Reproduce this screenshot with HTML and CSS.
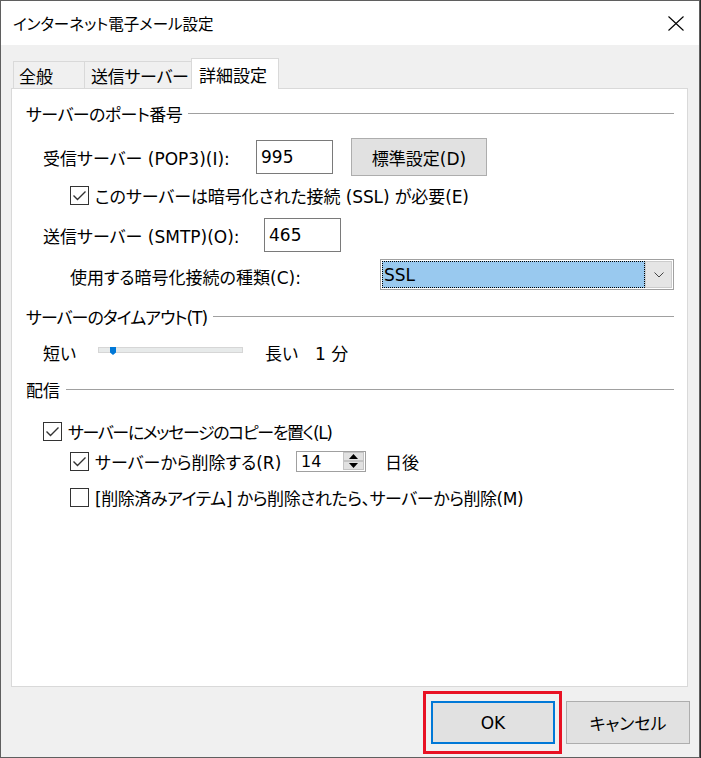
FILE: index.html
```html
<!DOCTYPE html>
<html lang="ja">
<head>
<meta charset="utf-8">
<title>インターネット電子メール設定</title>
<link rel="stylesheet" href="styles.css">
</head>
<body>
<div class="window">
  <div class="titlebar">
    <span class="title">インターネット電子メール設定</span>
    <svg class="close" viewBox="0 0 16 15" width="16" height="15"><path d="M0.5 0.5 L15.5 14.5 M15.5 0.5 L0.5 14.5" stroke="#000" stroke-width="1.1" fill="none"/></svg>
  </div>
  <div class="tabs">
    <div class="tab tab-general">全般</div>
    <div class="tab tab-send">送信サーバー</div>
    <div class="tab tab-adv">詳細設定</div>
  </div>
  <div class="panel">
    <div class="group g1"><span class="tight">サーバーのポート番号</span><span class="line"></span></div>
    <div class="row row-pop">
      <span class="lbl-pop">受信サーバー (POP3)(I):</span>
      <span class="input in-pop">995</span>
      <span class="btn btn-std">標準設定(D)</span>
    </div>
    <div class="row row-ssl">
      <span class="cb"><svg viewBox="0 0 17 17" width="17" height="17"><path d="M2.5 8.5 L6.5 12.5 L14.5 4.5" stroke="#333" stroke-width="1.4" fill="none"/></svg></span>
      <span class="slight">このサーバーは暗号化された接続 (SSL) が必要(E)</span>
    </div>
    <div class="row row-smtp">
      <span class="lbl-smtp">送信サーバー (SMTP)(O):</span>
      <span class="input in-smtp">465</span>
    </div>
    <div class="row row-enc">
      <span class="lbl-enc">使用する暗号化接続の種類(C):</span>
      <span class="combo">
        <span class="combo-val">SSL</span>
        <span class="combo-btn"><svg viewBox="0 0 10 6" width="10" height="6"><path d="M0.5 0.5 L5 5 L9.5 0.5" stroke="#444" stroke-width="1" fill="none"/></svg></span>
      </span>
    </div>
    <div class="group g2"><span class="tighter-g">サーバーのタイムアウト(T)</span><span class="line"></span></div>
    <div class="row row-slider">
      <span class="lbl-short">短い</span>
      <span class="track"><span class="thumb"></span></span>
      <span class="lbl-long">長い</span>
      <span>1 分</span>
    </div>
    <div class="group g3"><span>配信</span><span class="line"></span></div>
    <div class="row row-copy">
      <span class="cb"><svg viewBox="0 0 17 17" width="17" height="17"><path d="M2.5 8.5 L6.5 12.5 L14.5 4.5" stroke="#333" stroke-width="1.4" fill="none"/></svg></span>
      <span class="tighter">サーバーにメッセージのコピーを置く(L)</span>
    </div>
    <div class="row row-del">
      <span class="cb"><svg viewBox="0 0 17 17" width="17" height="17"><path d="M2.5 8.5 L6.5 12.5 L14.5 4.5" stroke="#333" stroke-width="1.4" fill="none"/></svg></span>
      <span class="lbl-del">サーバーから削除する(R)</span>
      <span class="spin">
        <span class="spin-val">14</span>
        <span class="spin-btns">
          <span class="spin-b"><svg viewBox="0 0 9 5" width="9" height="5"><path d="M0 5 L4.5 0 L9 5 Z" fill="#000"/></svg></span>
          <span class="spin-b"><svg viewBox="0 0 9 5" width="9" height="5"><path d="M0 0 L4.5 5 L9 0 Z" fill="#000"/></svg></span>
        </span>
      </span>
      <span class="lbl-days">日後</span>
    </div>
    <div class="row row-trash">
      <span class="cb"></span>
      <span class="trash">[削除済みアイテム] から削除されたら、サーバーから削除(M)</span>
    </div>
  </div>
  <div class="footer">
    <span class="ok-wrap">
      <span class="btn btn-ok">OK</span>
      <span class="mark"></span>
    </span>
    <span class="btn btn-cancel">キャンセル</span>
  </div>
</div>
</body>
</html>
```

FILE: styles.css
```css
* { box-sizing: border-box; margin: 0; padding: 0; }
html, body { width: 701px; height: 758px; overflow: hidden; }
body {
  background: #2b2b2b;
  font-family: "DejaVu Sans", "Noto Sans CJK JP", sans-serif;
  font-feature-settings: "palt";
  color: #000;
}
.window {
  width: 700px;
  height: 758px;
  border: 1px solid #5f5f5f;
  background: #f0f0f0;
  display: flex;
  flex-direction: column;
}
.titlebar {
  height: 44px;
  flex: none;
  background: #fff;
  display: flex;
  align-items: center;
  padding: 0 15px 0 12px;
  font-size: 15.5px;
}
.title { flex: 1; }
.close { display: block; }

.tabs {
  display: flex;
  align-items: flex-end;
  height: 30px;
  flex: none;
  margin: 13px 0 0 12px;
  font-size: 17px;
}
.tab {
  height: 27px;
  border: 1px solid #d9d9d9;
  border-bottom: none;
  display: flex;
  align-items: center;
  margin-left: -1px;
  background: #f0f0f0;
  white-space: nowrap;
}
.tab-general { width: 72px; padding-left: 5px; margin-left: 0; }
.tab-send { width: 108px; padding-left: 6px; letter-spacing: -0.3px; }
.tab-adv {
  width: 88px;
  height: 31px;
  padding-left: 7px;
  background: #fff;
  margin-bottom: -1px;
  position: relative;
  z-index: 1;
}

.panel {
  flex: none;
  margin: 0 11px 0 10px;
  height: 599px;
  border: 1px solid #d9d9d9;
  background: #fff;
  padding: 0 13px 0 14px;
  font-size: 17px;
}
.tight { letter-spacing: -0.6px; }
.slight { letter-spacing: -0.1px; }
.tighter-g { letter-spacing: -1px; }
.tighter { letter-spacing: -1.4px; }
.trash { letter-spacing: -0.45px; }
.group {
  display: flex;
  align-items: center;
  height: 23px;
  white-space: nowrap;
}
.group .line {
  flex: 1;
  height: 1px;
  background: #a0a0a0;
  margin-left: 6px;
}
.g1 { margin-top: 13px; }
.g2 { margin-top: 15px; }
.g3 { margin-top: 16px; }

.row {
  display: flex;
  align-items: center;
  white-space: nowrap;
}
.row-pop { margin-top: 13px; height: 38px; padding-left: 17px; }
.lbl-pop { width: 213px; }
.input {
  height: 34px;
  border: 1px solid #7a7a7a;
  background: #fff;
  padding-left: 4px;
  display: flex;
  align-items: center;
}
.in-pop { width: 77px; }
.btn {
  display: flex;
  align-items: center;
  justify-content: center;
  background: #e1e1e1;
  border: 1px solid #adadad;
}
.btn-std { margin-left: 18px; width: 136px; height: 38px; }

.cb {
  flex: none;
  width: 19px;
  height: 19px;
  border: 1px solid #333;
  background: #fff;
  margin-right: 6px;
  display: block;
}
.cb svg { display: block; }
.row-ssl { margin-top: 9px; height: 21px; padding-left: 44px; }

.row-smtp { margin-top: 12px; height: 34px; padding-left: 17px; }
.lbl-smtp { width: 221px; }
.in-smtp { width: 77px; }

.row-enc { margin-top: 7px; height: 31px; padding-left: 44px; }
.lbl-enc { width: 311px; padding-top: 4px; }
.combo {
  width: 295px;
  height: 31px;
  border: 1px solid #a0a0a0;
  padding: 1px;
  display: flex;
  background: #fff;
}
.combo-val {
  flex: 1;
  background: #99c9ef;
  border: 1px dotted #000;
  padding-left: 1px;
  display: flex;
  align-items: center;
}
.combo-btn {
  width: 27px;
  background: #e5e5e5;
  border: 1px solid #cccccc;
  display: flex;
  align-items: center;
  justify-content: center;
}
.combo-btn svg { display: block; }

.row-slider { margin-top: 14px; height: 20px; padding-left: 17px; }
.lbl-short { width: 55px; }
.track {
  position: relative;
  width: 145px;
  height: 6px;
  margin-top: -4px;
  margin-right: 22px;
  background: #e7eaea;
  border: 1px solid #d6d6d6;
}
.thumb {
  position: absolute;
  left: 11px;
  top: -1px;
  width: 6px;
  height: 8px;
  background: #0078d7;
  clip-path: polygon(0 0, 100% 0, 100% 70%, 50% 100%, 0 70%);
}
.lbl-long { width: 50px; }

.row-copy { margin-top: 20px; height: 21px; padding-left: 17px; }
.row-del { margin-top: 9px; height: 21px; padding-left: 44px; }
.lbl-del { width: 201px; }
.spin {
  width: 70px;
  height: 21px;
  border: 1px solid #a0a0a0;
  display: flex;
  background: #fff;
}
.spin-val {
  flex: 1;
  font-size: 16px;
  padding-left: 4px;
  display: flex;
  align-items: center;
}
.spin-btns {
  width: 21px;
  margin: 0 1px 1px 0;
  display: flex;
  flex-direction: column;
}
.spin-b {
  flex: 1;
  background: #e1e1e1;
  border: 1px solid #c4c4c4;
  display: flex;
  align-items: center;
  justify-content: center;
}
.spin-b svg { display: block; }
.lbl-days { margin-left: 19px; }
.row-trash { margin-top: 15px; height: 21px; padding-left: 44px; }

.footer {
  flex: 1;
  display: flex;
  justify-content: flex-end;
  align-items: flex-start;
  padding: 14px 9px 0 0;
  gap: 11px;
  font-size: 17px;
}
.ok-wrap { position: relative; display: block; }
.btn-ok {
  width: 124px;
  height: 43px;
  border: 2px solid #0078d7;
}
.mark {
  position: absolute;
  top: -10px;
  left: -8px;
  right: -7px;
  bottom: -10px;
  border: 3px solid #e81123;
}
.btn-cancel { width: 124px; height: 43px; }
```
